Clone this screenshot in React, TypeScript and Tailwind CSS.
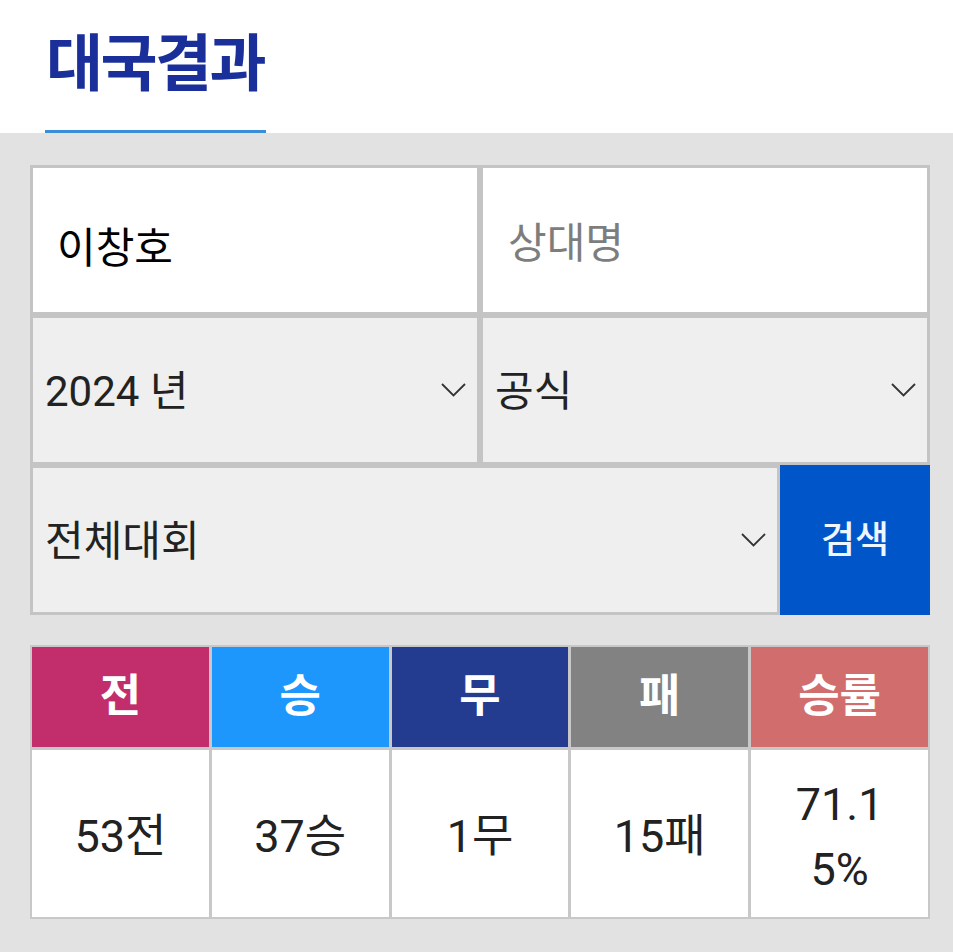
import { useState } from 'react'

const font = { fontFamily: 'Roboto, "Noto Sans CJK KR", sans-serif' }

function Chevron() {
  return (
    <svg width="25" height="14" viewBox="0 0 25 14" fill="none" className="shrink-0">
      <polyline points="1,1 12.5,12.5 24,1" stroke="#333" strokeWidth="1.8" />
    </svg>
  )
}

function Select({ label }: { label: string }) {
  return (
    <div className="flex h-full items-center justify-between bg-[#efefef] pl-[12px] pr-[11px] text-[42px] text-[#222]">
      <span className="pt-[2px]">{label}</span>
      <Chevron />
    </div>
  )
}

const stats = [
  { head: '전', value: '53전', bg: 'bg-[#c22e6b]' },
  { head: '승', value: '37승', bg: 'bg-[#1d97fb]' },
  { head: '무', value: '1무', bg: 'bg-[#243c8f]' },
  { head: '패', value: '15패', bg: 'bg-[#828282]' },
  { head: '승률', value: '71.15%', bg: 'bg-[#d16e6d]' },
]

export default function App() {
  const [player, setPlayer] = useState('이창호')
  const [opponent, setOpponent] = useState('')

  return (
    <div className="min-h-[952px] w-[953px] bg-[#e2e2e2]" style={font}>
      <div className="h-[133px] bg-white px-[45px]">
        <div className="flex h-full w-[221px] items-center border-b-[3px] border-[#3a8dd6] pl-[1px]">
          <h1 className="pb-[1px] text-[62px] font-bold leading-none tracking-[-2.5px] text-[#1b2f9b]">대국결과</h1>
        </div>
      </div>

      <div className="ml-[30px] mt-[32px] w-[900px] bg-[#c4c4c4] p-[3px]">
        <div className="grid grid-cols-2 grid-rows-[144px_144px] gap-[6px]">
          <input
            value={player}
            onChange={(e) => setPlayer(e.target.value)}
            className="h-full w-full bg-white pl-[24px] pt-[8px] text-[42px] text-black outline-none"
          />
          <input
            value={opponent}
            onChange={(e) => setOpponent(e.target.value)}
            placeholder="상대명"
            className="h-full w-full bg-white pl-[25px] pt-[6px] text-[42px] text-black outline-none placeholder:text-[#7d7d7d]"
          />
          <Select label="2024 년" />
          <Select label="공식" />
        </div>
        <div className="mt-[6px] flex h-[144px] gap-[3px]">
          <div className="flex-1">
            <Select label="전체대회" />
          </div>
          <button className="-my-[3px] -mr-[3px] w-[150px] bg-[#0056c9] pt-[2px] text-[37px] font-medium text-[#eef6ff]">
            검색
          </button>
        </div>
      </div>

      <div className="ml-[30px] mt-[30px] w-[900px] bg-[#c8c8c8] p-[2px]">
        <div className="grid grid-cols-5 grid-rows-[100px_167px] gap-[3px]">
          {stats.map((s) => (
            <div key={s.head} className={`flex items-center justify-center ${s.bg} text-[45px] font-bold text-white`}>
              {s.head}
            </div>
          ))}
          {stats.map((s) => (
            <div key={s.value} className="flex items-center justify-center bg-white pt-[6px] text-[45px] text-[#222]">
              <span className="w-[100px] break-all text-center leading-[65px]">{s.value}</span>
            </div>
          ))}
        </div>
      </div>
    </div>
  )
}
